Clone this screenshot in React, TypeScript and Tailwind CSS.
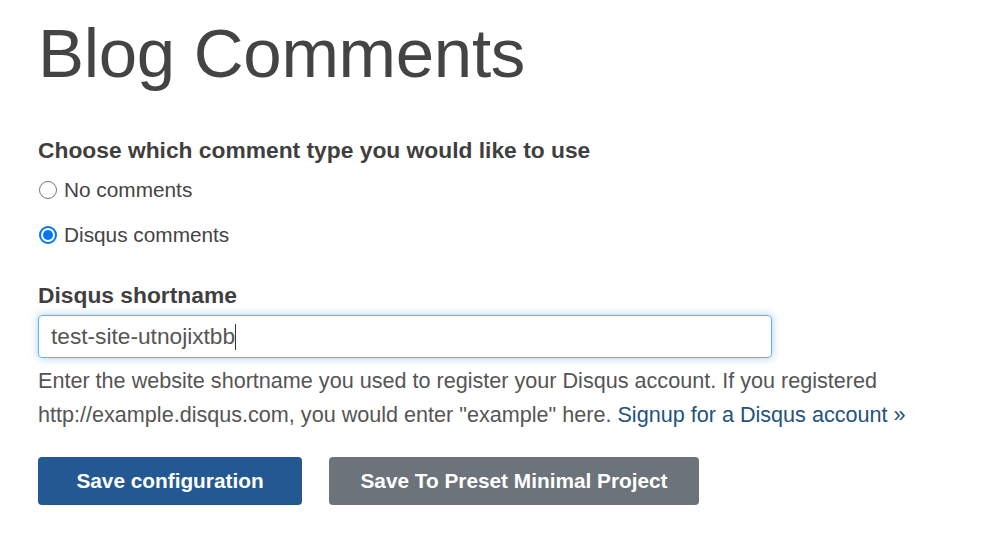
import React from "react";

export default function App() {
  return (
    <div className="min-h-[537px] bg-white text-[#444] pl-[38px] pt-[14px]" style={{ fontFamily: '"Liberation Sans", Arial, sans-serif' }}>
      <h1 className="text-[69px] leading-[80px] font-normal text-[#444] tracking-[-0.3px]">Blog Comments</h1>
      <div className="mt-[42px]">
        <div className="text-[22.8px] font-bold leading-[28px] text-[#3f3f3f]">Choose which comment type you would like to use</div>
        <label className="flex items-center mt-[14px] h-[24px]">
          <span className="w-[18px] h-[18px] rounded-full border border-[#767676] bg-white mr-[7px] ml-[1px]" />
          <span className="text-[20.8px] text-[#444]">No comments</span>
        </label>
        <label className="flex items-center mt-[21px] h-[24px]">
          <span className="w-[18px] h-[18px] rounded-full border-[2px] border-[#0075ff] bg-white mr-[7px] ml-[1px] flex items-center justify-center">
            <span className="w-[10px] h-[10px] rounded-full bg-[#0075ff]" />
          </span>
          <span className="text-[20.8px] text-[#444]">Disqus comments</span>
        </label>
      </div>
      <div className="mt-[34px]">
        <div className="text-[22.8px] font-bold leading-[28px] text-[#3f3f3f]">Disqus shortname</div>
        <div className="mt-[6px] w-[734px] h-[43px] rounded-[4px] border border-[#66afe9] shadow-[0_0_8px_rgba(102,175,233,0.6)] flex items-center pl-[12px]">
          <span className="text-[22.7px] text-[#555]">test-site-utnojixtbb</span>
          <span className="w-px h-[26px] bg-[#333]" />
        </div>
        <p className="mt-[6px] text-[21.6px] leading-[34px] text-[#555] w-[920px]">
          Enter the website shortname you used to register your Disqus account. If you registered http://example.disqus.com, you would enter "example" here.{" "}
          <a className="text-[#23527c]">Signup for a Disqus account »</a>
        </p>
      </div>
      <div className="flex gap-[27px] mt-[25px]">
        <button className="w-[264px] h-[48px] rounded-[4px] bg-[#245892] text-white text-[20.8px] font-bold">Save configuration</button>
        <button className="w-[370px] h-[48px] rounded-[4px] bg-[#6c737b] text-white text-[20.8px] font-bold">Save To Preset Minimal Project</button>
      </div>
    </div>
  );
}
